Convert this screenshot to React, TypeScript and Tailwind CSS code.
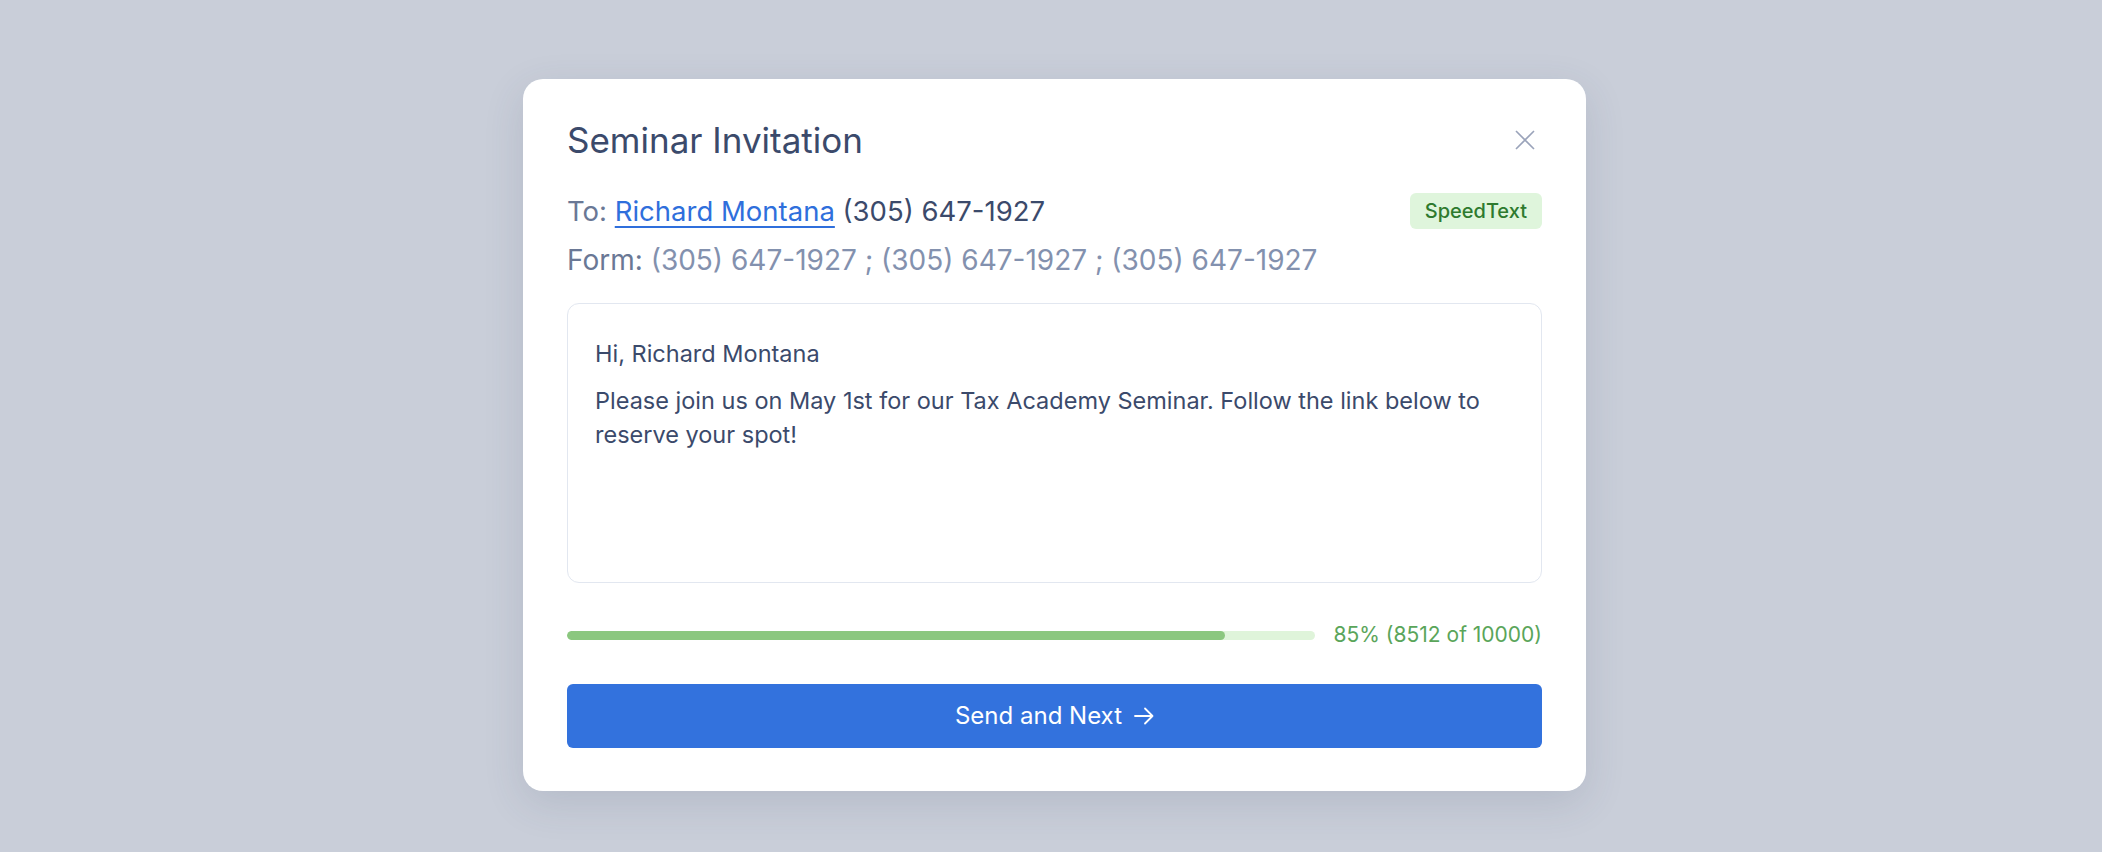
export default function App() {
  return (
    <div className="min-h-[852px] bg-[#c9ced9] flex justify-center pl-[7px] font-['Inter',sans-serif]">
      <div className="mt-[79px] mb-[61px] w-[1063px] bg-white rounded-[20px] shadow-[0_12px_40px_rgba(60,70,100,0.14)] px-[44px] pt-[41px] pb-[42px]">
        {/* Header */}
        <div className="flex items-start justify-between">
          <h2 className="text-[35px] leading-[40px] font-normal text-[#3b4a6b]">Seminar Invitation</h2>
          <button className="mt-[10px] mr-[7px] text-[#9aa3ba]">
            <svg width="20" height="20" viewBox="0 0 20 20" fill="none" stroke="currentColor" strokeWidth="1.6">
              <path d="M1 1L19 19M19 1L1 19" />
            </svg>
          </button>
        </div>

        {/* Recipients */}
        <div className="mt-[33px] flex items-center justify-between">
          <p className="text-[27.5px] leading-[36px] text-[#6a7895]">
            To:{' '}
            <a href="#" className="text-[#2f6fdc] underline underline-offset-[5px] decoration-[1.5px]">
              Richard Montana
            </a>{' '}
            <span className="text-[#3b4a6b]">(305) 647-1927</span>
          </p>
          <span className="h-[36px] px-[15px] rounded-[6px] bg-[#dff5dc] text-[#2e7a2e] text-[20px] leading-[36px] font-medium">
            SpeedText
          </span>
        </div>
        <p className="mt-[13px] text-[28px] leading-[36px] text-[#6a7895]">
          Form: <span className="text-[#8391ae]">(305) 647-1927 ; (305) 647-1927 ; (305) 647-1927</span>
        </p>

        {/* Message */}
        <div className="mt-[25px] h-[280px] border border-[#e2e7f0] rounded-[12px] px-[27px] pt-[33px] text-[23.5px] leading-[34px] text-[#3b4a6b]">
          <p>Hi, Richard Montana</p>
          <p className="mt-[13px]">
            Please join us on May 1st for our Tax Academy Seminar. Follow the link below to
            <br />
            reserve your spot!
          </p>
        </div>

        {/* Progress */}
        <div className="mt-[37px] h-[30px] flex items-center gap-[19px]">
          <div className="flex-1 h-[9px] rounded-full bg-[#dff4da] overflow-hidden">
            <div className="h-full w-[88%] rounded-full bg-[#8bc77f]" />
          </div>
          <span className="text-[21px] leading-[30px] text-[#5aa55a]">85% (8512 of 10000)</span>
        </div>

        {/* Action */}
        <button className="mt-[34px] w-full h-[64px] rounded-[6px] bg-[#3372dd] text-white text-[24px] flex items-center justify-center gap-[12px]">
          Send and Next
          <svg width="20" height="18" viewBox="0 0 20 18" fill="none" stroke="currentColor" strokeWidth="1.8" strokeLinecap="round" strokeLinejoin="round">
            <path d="M1 9H18.5M11 1.5L18.5 9L11 16.5" />
          </svg>
        </button>
      </div>
    </div>
  );
}
